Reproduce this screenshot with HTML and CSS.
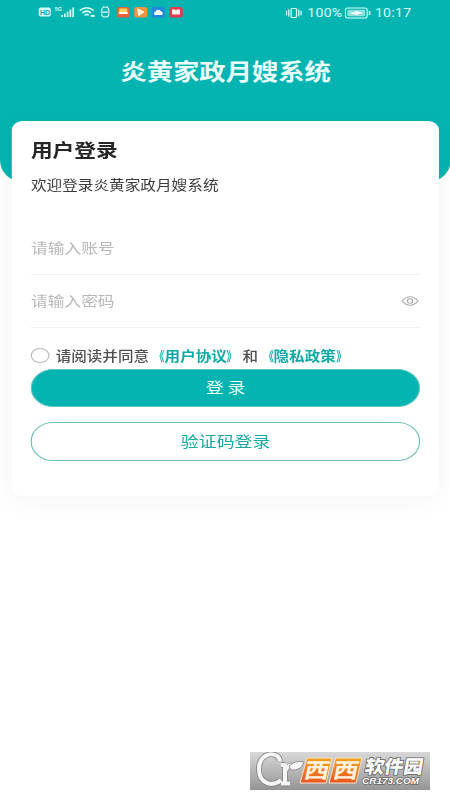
FILE: index.html
```html
<!DOCTYPE html>
<html lang="zh-CN">
<head>
<meta charset="utf-8">
<title>炎黄家政月嫂系统</title>
<link rel="stylesheet" href="styles.css">
</head>
<body>
<div class="screen">
  <header class="hero">
    <div class="status">
      <svg class="status-left" viewBox="0 0 150 16" preserveAspectRatio="none">
        <rect x="1" y="3.500" width="12" height="9" rx="2" fill="#d9fffb"/>
        <text x="2.300" y="10.800" class="hd">HD</text>
        <text x="17" y="7" class="five-g">5G</text>
        <g fill="#d9fffb"><rect x="23.500" y="11" width="1.700" height="2"/><rect x="26.200" y="9.500" width="1.700" height="3.500"/><rect x="29" y="7.500" width="1.700" height="5.500"/><rect x="31.800" y="5.500" width="1.700" height="7.500"/><rect x="34.600" y="3.500" width="1.700" height="9.500"/></g>
        <g fill="none" stroke="#d9fffb" stroke-width="1.500"><path d="M42 6.500Q49 .8 56 6.500M44.500 9Q49 5.200 53.500 9M46.800 11.300Q49 9.500 51 11.300"/><path d="M53 12h4" stroke-width="1.800"/></g>
        <g fill="none" stroke="#d9fffb" stroke-width="1.200"><path d="M64 7V6a3.500 3 0 0 1 7 0v1M64 9.500v1a3.500 2.500 0 0 0 7 0v-1M63 8.200h9M65 2.500l1.200 1M70 2.500l-1.200 1"/></g>
        <rect x="79" y="3" width="13" height="10.500" rx="2.500" fill="#e8603c"/><path d="M81.500 4.500h8V8h-8z" fill="#ffd35a"/><path d="M81 8h9v2h-9z" fill="#fff"/>
        <rect x="96.500" y="3" width="13" height="10.500" rx="2.500" fill="#ee9440"/><path d="M100 5l6 3-5 3.500z" fill="#ffe9c8" stroke="#fff"/>
        <rect x="114" y="3" width="13" height="10.500" rx="2.500" fill="#2387db"/><path d="M117 11a2 2 0 0 1 .8-3.500 3 3 0 0 1 5.500 0 2 2 0 0 1 1 3.500z" fill="#fff"/>
        <rect x="131.500" y="3" width="13.500" height="10.500" rx="2.500" fill="#e13d50"/><path d="M134.300 5.500q2-.8 4 .7 2-1.500 4-.7v5h-8z" fill="#ffeced"/>
      </svg>
      <div class="status-right">
        <svg class="vibrate" viewBox="0 0 17 14" preserveAspectRatio="none"><path d="M1 4.500v5M3.300 3v8M13.700 3v8M16 4.500v5" fill="none" stroke="#d9fffb" stroke-width="1.300"/><rect x="5.700" y="1.700" width="5.600" height="10.600" rx="1" fill="none" stroke="#d9fffb" stroke-width="1.300"/></svg>
        <span>100%</span>
        <svg class="battery" viewBox="0 0 26 14" preserveAspectRatio="none"><rect x=".7" y="2" width="21.500" height="10" rx="2.500" fill="none" stroke="#d9fffb" stroke-width="1.100"/><rect x="2.700" y="3.700" width="17.500" height="6.600" rx="1" fill="#8fe0dc"/><path d="M5 7l5.500-.8V4.700L18 7l-5 1v1.500z" fill="#fff"/><path d="M24.500 5v4" stroke="#d9fffb" stroke-width="1.500"/></svg>
        <span>10:17</span>
      </div>
    </div>
    <h1 class="brand">炎黄家政月嫂系统</h1>
  </header>
  <main class="card">
    <h2 class="heading">用户登录</h2>
    <p class="welcome">欢迎登录炎黄家政月嫂系统</p>
    <div class="field account"><span>请输入账号</span></div>
    <div class="field password"><span>请输入密码</span>
      <svg class="eye" viewBox="0 0 15 12"><path d="M.7 6Q7.500-2.600 14.300 6 7.500 14.600.7 6z"/><circle cx="7.500" cy="6" r="2.200"/></svg>
    </div>
    <div class="agree"><span class="radio"></span><span>请阅读并同意<a><i class="open">《</i>用户协议<i class="close">》</i></a>和<a><i class="open">《</i>隐私政策<i class="close">》</i></a></span></div>
    <div class="button primary">登 录</div>
    <div class="button outline">验证码登录</div>
  </main>
</div>
<div class="watermark">
  <svg width="180" height="38" viewBox="0 0 180 38">
    <defs>
      <linearGradient id="tile" x1="0" y1="0" x2="0" y2="1"><stop offset="0" stop-color="#f5a51f"/><stop offset="1" stop-color="#e9551f"/></linearGradient>
    </defs>
    <g fill="none">
      <path d="M30 9C29-1 9-1 9 17c0 16 15 18 22 11M35 12v19M31 31.500h9M31 13h4M35 20c1-5 5-7 8-6" stroke="#777" stroke-width="5.600"/>
      <path d="M30 9C29-1 9-1 9 17c0 16 15 18 22 11M35 12v19M31 31.500h9M31 13h4M35 20c1-5 5-7 8-6" stroke="#f5f5f5" stroke-width="4.200"/>
    </g>
    <path d="M39 14q6-6 15-4-3 9-13 8z" fill="#f5f5f5" stroke="#777" stroke-width=".7"/>
    <path d="M57 6h25l-6 25H50zM85.500 6H112l-6 25H79z" fill="url(#tile)" stroke="#f7e4ce"/>
    <g class="xixi"><text transform="translate(53 25.500) skewX(-12) scale(1.2 1)">西</text><text transform="translate(82 25.500) skewX(-12) scale(1.2 1)">西</text></g>
    <text class="park" transform="translate(114 21) skewX(-10)" textLength="58" lengthAdjust="spacingAndGlyphs">软件园</text>
    <text class="domain" x="112" y="31.500" textLength="57" lengthAdjust="spacingAndGlyphs">CR173.COM</text>
  </svg>
</div>
</body>
</html>
```
FILE: styles.css
```css
* { box-sizing: border-box; }
html, body { margin: 0; height: 800px; overflow: hidden; background: #fff; }
body { position: relative; font-family: "Noto Sans CJK SC", sans-serif; }

/* The whole screen is laid out narrow and widened to the window */
.screen {
  width: 381.5px;
  height: 800px;
  transform: scaleX(1.18);
  transform-origin: 0 0;
}
.hero {
  height: 182px;
  background: #04b4b1;
  border-radius: 0 0 19px 19px / 0 0 22px 22px;
}
.status {
  height: 26px;
  display: flex;
  justify-content: space-between;
  padding: 0 32.9px 0 32.4px;
}
.status-left { width: 127.1px; height: 16px; margin-top: 4px; }
.hd { font: bold 7px "Liberation Sans", sans-serif; fill: #04a4a1; }
.five-g { font: bold 5.5px "Liberation Sans", sans-serif; fill: #d9fffb; }
.status-right {
  height: 25px;
  display: flex;
  align-items: center;
  font: 12px/24px Roboto, sans-serif;
  letter-spacing: .2px;
  color: #d9fffb;
}
.vibrate { width: 14px; height: 12px; margin-right: 4px; }
.battery { width: 22.5px; height: 14px; margin: 0 3px 0 2px; }
.brand {
  margin: 28px 0 0;
  text-align: center;
  text-indent: 1px;
  font-size: 22.3px;
  line-height: 32px;
  font-weight: 700;
  color: #e9fffd;
}
.card {
  position: relative;
  height: 375px;
  width: 362px;
  margin: -61px 0 0 10.2px;
  padding: 15px 16px 0;
  background: #fff;
  border-radius: 9px;
  box-shadow: 0 4px 26px rgba(0, 0, 0, .045);
}
.heading {
  margin: 0;
  font-size: 18.4px;
  line-height: 26px;
  font-weight: 700;
  color: #262626;
}
.welcome {
  margin: 12px 0 0;
  font-size: 13.25px;
  line-height: 22px;
  color: #3c3c3c;
}
.field {
  height: 53px;
  display: flex;
  align-items: center;
  justify-content: space-between;
  font-size: 14.2px;
  color: #b8b8b8;
  border-bottom: 1px solid #f1f1f1;
}
.field span { padding-bottom: 2px; }
.account { margin-top: 26px; }
.eye { width: 15px; height: 12px; margin-right: 1px; fill: none; stroke: #aaa; stroke-width: 1.1; }
.agree {
  height: 27px;
  margin-top: 14px;
  display: flex;
  align-items: center;
  gap: 5.5px;
  white-space: nowrap;
  font-size: 13.2px;
  font-weight: 500;
  line-height: 26px;
  color: #505050;
}
.agree a { color: #10aaa5; font-weight: 700; }
.agree i { display: inline-block; width: 1em; font-style: normal; transform: scaleX(.65); }
.open { transform-origin: 100% 50%; }
.close { transform-origin: 0 50%; }
.radio { width: 15.5px; height: 15px; border: 1px solid #bbb; border-radius: 50%; }
.button {
  height: 38px;
  display: flex;
  align-items: center;
  justify-content: center;
  border-radius: 19px;
  font-size: 15.2px;
  padding-bottom: 4px;
}
.primary { background: #04b4b1; color: #e9fffd; border: 1px solid #65c5c1; }
.outline { margin-top: 15px; height: 39px; border: 1px solid #6fc0b4; color: #1aa8a0; }
.watermark {
  position: absolute;
  left: 250px;
  top: 752px;
  width: 180px;
  height: 38px;
  background: linear-gradient(#d8d8d8, #959595);
}
.watermark svg { display: block; }
.xixi { font: 700 21px "Noto Sans CJK SC", sans-serif; fill: #fff3df; }
.park { font: 900 18px "Noto Sans CJK SC", sans-serif; fill: #fff; stroke: #666; stroke-width: 1.6px; paint-order: stroke; }
.domain { font: bold 9.5px "Liberation Sans", sans-serif; font-style: italic; fill: #fff; stroke: #666; stroke-width: 1.4px; paint-order: stroke; }
```
